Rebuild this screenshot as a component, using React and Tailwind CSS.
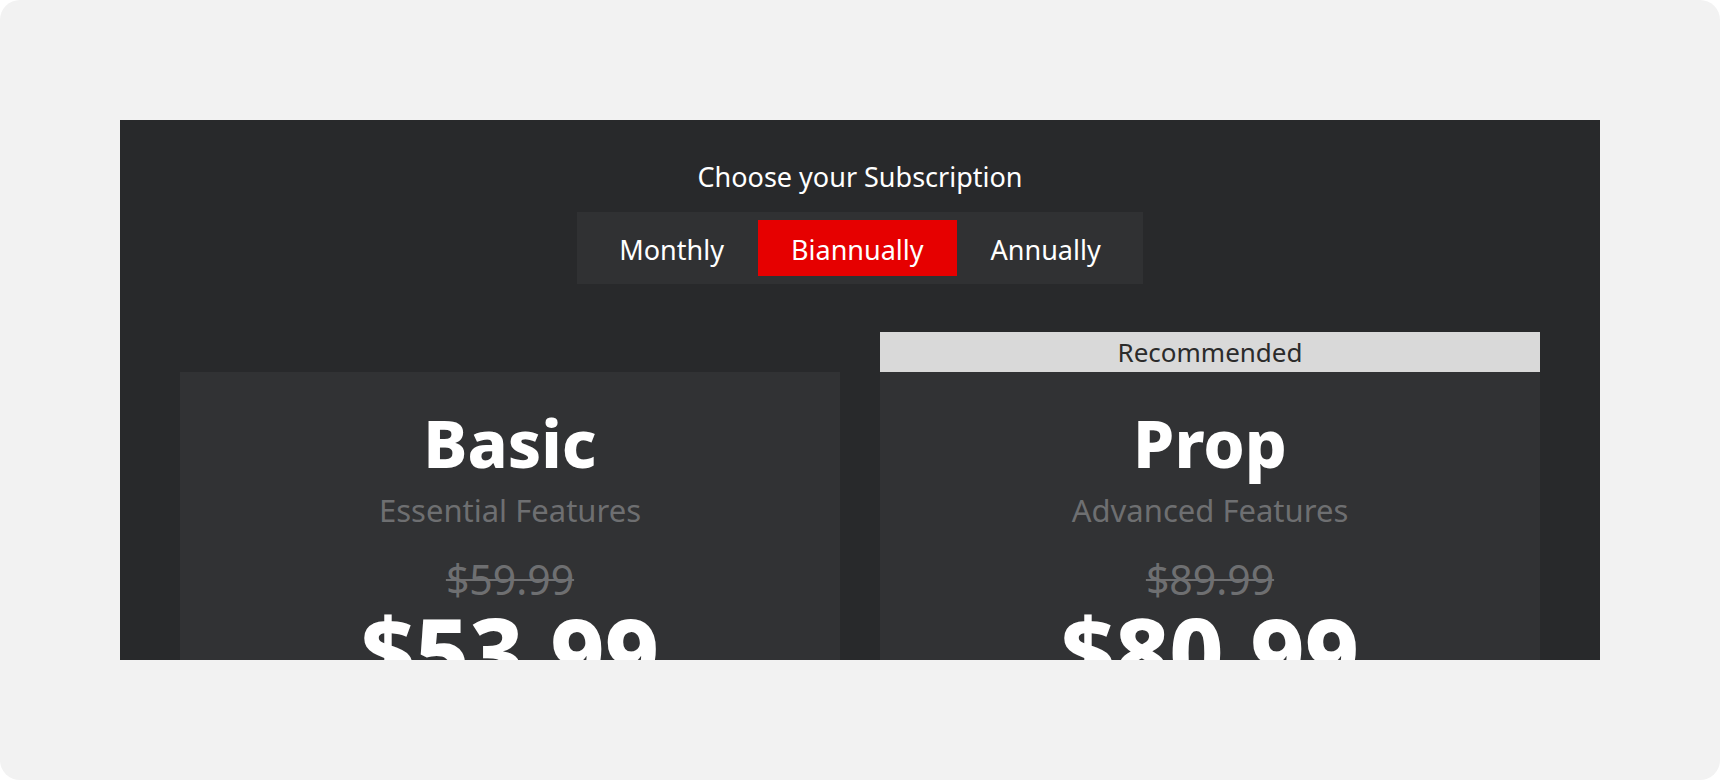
import React, { useState } from "react";

const plans = [
  { name: "Basic", tagline: "Essential Features", oldPrice: "$59.99", price: "$53.99" },
  { name: "Prop", tagline: "Advanced Features", oldPrice: "$89.99", price: "$80.99", recommended: true },
];

const periods = ["Monthly", "Biannually", "Annually"];

const PlanCard = ({ plan }) => (
  <div className="flex flex-col">
    {plan.recommended && (
      <div className="h-10 bg-[#d9d9d9] text-[#2b2b2b] text-[26px] leading-10 text-center">
        Recommended
      </div>
    )}
    <div className="bg-[#313234] pt-[37px] pb-10 flex flex-col items-center text-center">
      <h2 className="text-[66px] leading-none font-extrabold text-white">{plan.name}</h2>
      <p className="mt-[15px] text-[31px] leading-[40px] text-[#6e6f71]">{plan.tagline}</p>
      <p className="mt-[24px] text-[41px] leading-[50px] text-[#6e6f71] line-through decoration-2">
        {plan.oldPrice}
      </p>
      <p className="mt-0 text-[94px] leading-none font-extrabold text-white">{plan.price}</p>
    </div>
  </div>
);

const App = () => {
  const [period, setPeriod] = useState("Biannually");

  return (
    <div className="min-h-[780px] bg-white font-['Noto_Sans',sans-serif]">
      <div className="h-[780px] rounded-[20px] bg-[#f2f2f2] p-[120px]">
        <div className="h-[540px] overflow-hidden bg-[#28292b] px-[60px] pt-[39px]">
          <h1 className="text-center text-[27px] leading-[36px] text-white">Choose your Subscription</h1>

          <div className="mt-[17px] flex justify-center">
            <div className="flex bg-[#303133] p-2">
              {periods.map((p) => (
                <button
                  key={p}
                  onClick={() => setPeriod(p)}
                  className={
                    p === period
                      ? "h-14 pt-1 px-[33px] text-[27px] text-white bg-[#e60000]"
                      : "h-14 pt-1 px-[34px] text-[27px] text-white"
                  }
                >
                  {p}
                </button>
              ))}
            </div>
          </div>

          <div className="mt-12 grid grid-cols-2 gap-10 items-end">
            {plans.map((plan) => (
              <PlanCard key={plan.name} plan={plan} />
            ))}
          </div>
        </div>
      </div>
    </div>
  );
};

export default App;
